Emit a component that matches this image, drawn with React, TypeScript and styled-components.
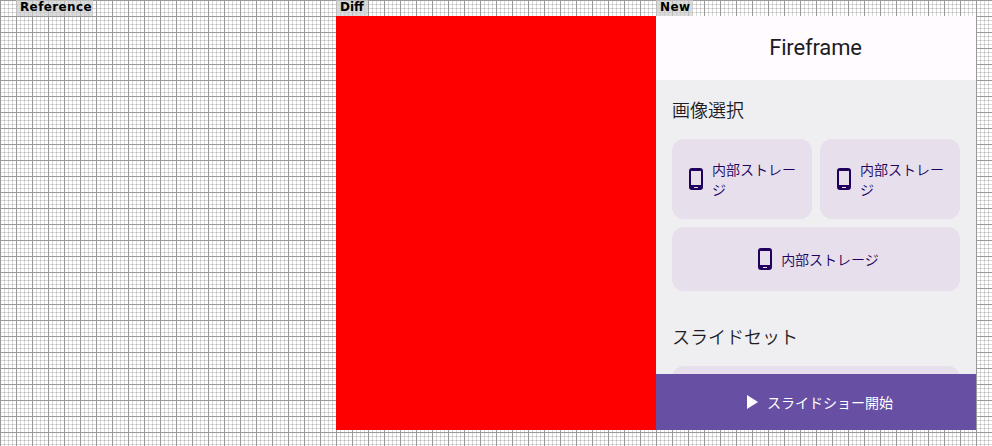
import React from "react";
import styled, { createGlobalStyle } from "styled-components";

const GlobalStyle = createGlobalStyle`
  * { box-sizing: border-box; }
  body { margin: 0; background: #fff; }
`;

const Canvas = styled.main`
  width: 992px;
  height: 446px;
  overflow: hidden;
  display: grid;
  grid-template-columns: 320px 320px 320px;
  grid-template-rows: 16px 414px;
  padding-left: 16px;
  background-color: #fff;
  background-image:
    linear-gradient(to right, #999 1px, transparent 1px),
    linear-gradient(to bottom, #999 1px, transparent 1px),
    linear-gradient(to right, rgba(0, 0, 0, 0.15) 1px, transparent 1px),
    linear-gradient(to bottom, rgba(0, 0, 0, 0.15) 1px, transparent 1px);
  background-size: 16px 16px, 16px 16px, 4px 4px, 4px 4px;
`;

const Caption = styled.div<{ $width: number; $spacing: number }>`
  width: ${(p) => p.$width}px;
  height: 16px;
  padding-left: 4px;
  background: rgba(204, 204, 204, 0.7);
  color: #000;
  font: bold 12px/15px "DejaVu Sans", sans-serif;
  letter-spacing: ${(p) => p.$spacing}px;
  white-space: nowrap;
`;

const BlankPane = styled.div``;

const DiffPane = styled.div`
  background: #f00;
`;

const Phone = styled.section`
  display: flex;
  flex-direction: column;
  overflow: hidden;
  background: #efeff1;
  color: #1c1b1f;
  font-family: Roboto, "Noto Sans CJK JP", sans-serif;
`;

const AppBar = styled.header`
  flex: none;
  height: 64px;
  display: flex;
  align-items: center;
  justify-content: center;
  padding: 0 1px 2px 0;
  background: #fffbff;
  font-size: 22px;
  letter-spacing: -0.15px;
`;

const Content = styled.div`
  flex: 1;
  min-height: 0;
  overflow: hidden;
  padding: 17px 16px 0;
`;

const Heading = styled.h2`
  margin: 0;
  height: 28px;
  font-size: 18px;
  font-weight: 350;
  line-height: 28px;
`;

const StorageGrid = styled.div`
  display: grid;
  grid-template-columns: 1fr 1fr;
  grid-template-rows: 80px 64px;
  gap: 8px;
  margin: 14px 0 33px;
`;

const StorageCard = styled.button<{ $wide?: boolean }>`
  grid-column: ${(p) => (p.$wide ? "1 / -1" : "auto")};
  display: flex;
  align-items: center;
  justify-content: ${(p) => (p.$wide ? "center" : "flex-start")};
  gap: 4px;
  padding: 0 12px;
  border: 0;
  border-radius: 12px;
  background: #e7dfec;
  color: #21005d;
  font: 350 14px/20px "Noto Sans CJK JP", sans-serif;
  text-align: left;
`;

const SlideSet = styled.div`
  height: 80px;
  margin-top: 14px;
  border-radius: 12px;
  background: #e7dfec;
`;

const StartButton = styled.button`
  flex: none;
  height: 56px;
  display: flex;
  align-items: center;
  justify-content: center;
  gap: 8px;
  padding: 0 0 0 8px;
  border: 0;
  background: #6750a4;
  color: #fff;
  font: 400 14px/20px "Noto Sans CJK JP", sans-serif;
`;

const Icon = styled.svg`
  flex: none;
  display: block;
`;

function PhoneIcon() {
  return (
    <Icon width="24" height="24" viewBox="0 0 24 24" fill="currentColor">
      <path d="M16 1H8a3 3 0 0 0-3 3v16a3 3 0 0 0 3 3h8a3 3 0 0 0 3-3V4a3 3 0 0 0-3-3zm-2 20h-4v-1h4v1zm3-3H7V4h10v14z" />
    </Icon>
  );
}

function PlayIcon() {
  return (
    <Icon width="12" height="14" viewBox="0 0 12 14" fill="currentColor">
      <path d="M0 0v14l11-7z" />
    </Icon>
  );
}

function Storage({ wide }: { wide?: boolean }) {
  return (
    <StorageCard $wide={wide}>
      <PhoneIcon />
      <span>内部ストレージ</span>
    </StorageCard>
  );
}

export default function App() {
  return (
    <>
      <GlobalStyle />
      <Canvas>
        <Caption $width={77} $spacing={0.38}>Reference</Caption>
        <Caption $width={32} $spacing={0}>Diff</Caption>
        <Caption $width={37} $spacing={0.4}>New</Caption>
        <BlankPane />
        <DiffPane />
        <Phone>
          <AppBar>Fireframe</AppBar>
          <Content>
            <Heading>画像選択</Heading>
            <StorageGrid>
              <Storage />
              <Storage />
              <Storage wide />
            </StorageGrid>
            <Heading>スライドセット</Heading>
            <SlideSet />
          </Content>
          <StartButton>
            <PlayIcon />
            <span>スライドショー開始</span>
          </StartButton>
        </Phone>
      </Canvas>
    </>
  );
}
